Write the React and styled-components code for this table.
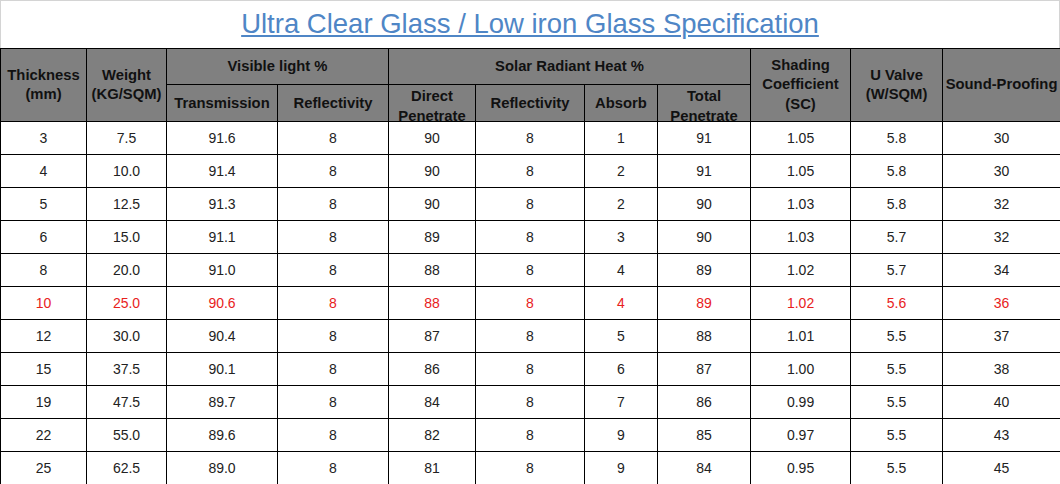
import React from 'react';
import styled, { createGlobalStyle } from 'styled-components';

const GlobalStyle = createGlobalStyle`
  html, body {
    margin: 0;
    padding: 0;
    background: #fff;
  }
  body {
    font-family: "Liberation Sans", Arial, sans-serif;
  }
`;

const Page = styled.div`
  width: 1060px;
  height: 484px;
  overflow: hidden;
`;

const TitleBar = styled.div`
  box-sizing: border-box;
  height: 48px;
  border: 1px solid #d4d4d4;
  border-bottom: none;
  display: flex;
  justify-content: center;
  align-items: flex-start;
  padding-top: 7px;
`;

const Title = styled.h1`
  margin: 0;
  font-family: "Liberation Sans", Arial, sans-serif;
  font-weight: normal;
  font-size: 27.5px;
  line-height: 31px;
  color: #4f86c6;
  text-decoration: underline;
  text-decoration-thickness: 2px;
  text-underline-offset: 2px;
`;

const Table = styled.table`
  width: 1060px;
  table-layout: fixed;
  border-collapse: collapse;
  font-size: 14px;
`;

const Th = styled.th`
  background: #808080;
  color: #111;
  font-weight: bold;
  font-size: 14.8px;
  line-height: 19.5px;
  border: 1px solid #000;
  padding: 0;
  height: ${(p) => p.$h}px;
  text-align: center;
  vertical-align: middle;
  white-space: nowrap;
`;

const Clip = styled.div`
  box-sizing: border-box;
  height: ${(p) => p.$h}px;
  padding-top: 2px;
  overflow: hidden;
  display: flex;
  flex-direction: column;
`;

const ClipText = styled.span`
  margin: auto 0;
`;

const Td = styled.td`
  border: 1px solid #000;
  padding: 0;
  height: 32px;
  text-align: center;
  vertical-align: middle;
  font-size: 14px;
  color: ${(p) => (p.$hot ? '#e8211c' : '#222')};
`;

const widths = [86, 80, 111, 111, 87, 109, 73, 93, 100, 92, 118];

const rows = [
  ['3', '7.5', '91.6', '8', '90', '8', '1', '91', '1.05', '5.8', '30'],
  ['4', '10.0', '91.4', '8', '90', '8', '2', '91', '1.05', '5.8', '30'],
  ['5', '12.5', '91.3', '8', '90', '8', '2', '90', '1.03', '5.8', '32'],
  ['6', '15.0', '91.1', '8', '89', '8', '3', '90', '1.03', '5.7', '32'],
  ['8', '20.0', '91.0', '8', '88', '8', '4', '89', '1.02', '5.7', '34'],
  ['10', '25.0', '90.6', '8', '88', '8', '4', '89', '1.02', '5.6', '36'],
  ['12', '30.0', '90.4', '8', '87', '8', '5', '88', '1.01', '5.5', '37'],
  ['15', '37.5', '90.1', '8', '86', '8', '6', '87', '1.00', '5.5', '38'],
  ['19', '47.5', '89.7', '8', '84', '8', '7', '86', '0.99', '5.5', '40'],
  ['22', '55.0', '89.6', '8', '82', '8', '9', '85', '0.97', '5.5', '43'],
  ['25', '62.5', '89.0', '8', '81', '8', '9', '84', '0.95', '5.5', '45'],
];

function SubHead({ children }) {
  return (
    <Th $h={36}>
      <Clip $h={36}>
        <ClipText>{children}</ClipText>
      </Clip>
    </Th>
  );
}

export default function App() {
  return (
    <Page>
      <GlobalStyle />
      <TitleBar>
        <Title>Ultra Clear Glass / Low iron Glass Specification</Title>
      </TitleBar>
      <Table>
        <colgroup>
          {widths.map((w, i) => (
            <col key={i} style={{ width: w }} />
          ))}
        </colgroup>
        <thead>
          <tr>
            <Th rowSpan={2} $h={36}>Thickness<br />(mm)</Th>
            <Th rowSpan={2} $h={36}>Weight<br />(KG/SQM)</Th>
            <Th colSpan={2} $h={35}>Visible light %</Th>
            <Th colSpan={4} $h={35}>Solar Radiant Heat %</Th>
            <Th rowSpan={2} $h={36}>Shading<br />Coefficient<br />(SC)</Th>
            <Th rowSpan={2} $h={36}>U Valve<br />(W/SQM)</Th>
            <Th rowSpan={2} $h={36}>Sound-Proofing</Th>
          </tr>
          <tr>
            <SubHead>Transmission</SubHead>
            <SubHead>Reflectivity</SubHead>
            <SubHead>Direct<br />Penetrate</SubHead>
            <SubHead>Reflectivity</SubHead>
            <SubHead>Absorb</SubHead>
            <SubHead>Total<br />Penetrate</SubHead>
          </tr>
        </thead>
        <tbody>
          {rows.map((r) => (
            <tr key={r[0]}>
              {r.map((v, i) => (
                <Td key={i} $hot={r[0] === '10'}>{v}</Td>
              ))}
            </tr>
          ))}
        </tbody>
      </Table>
    </Page>
  );
}
